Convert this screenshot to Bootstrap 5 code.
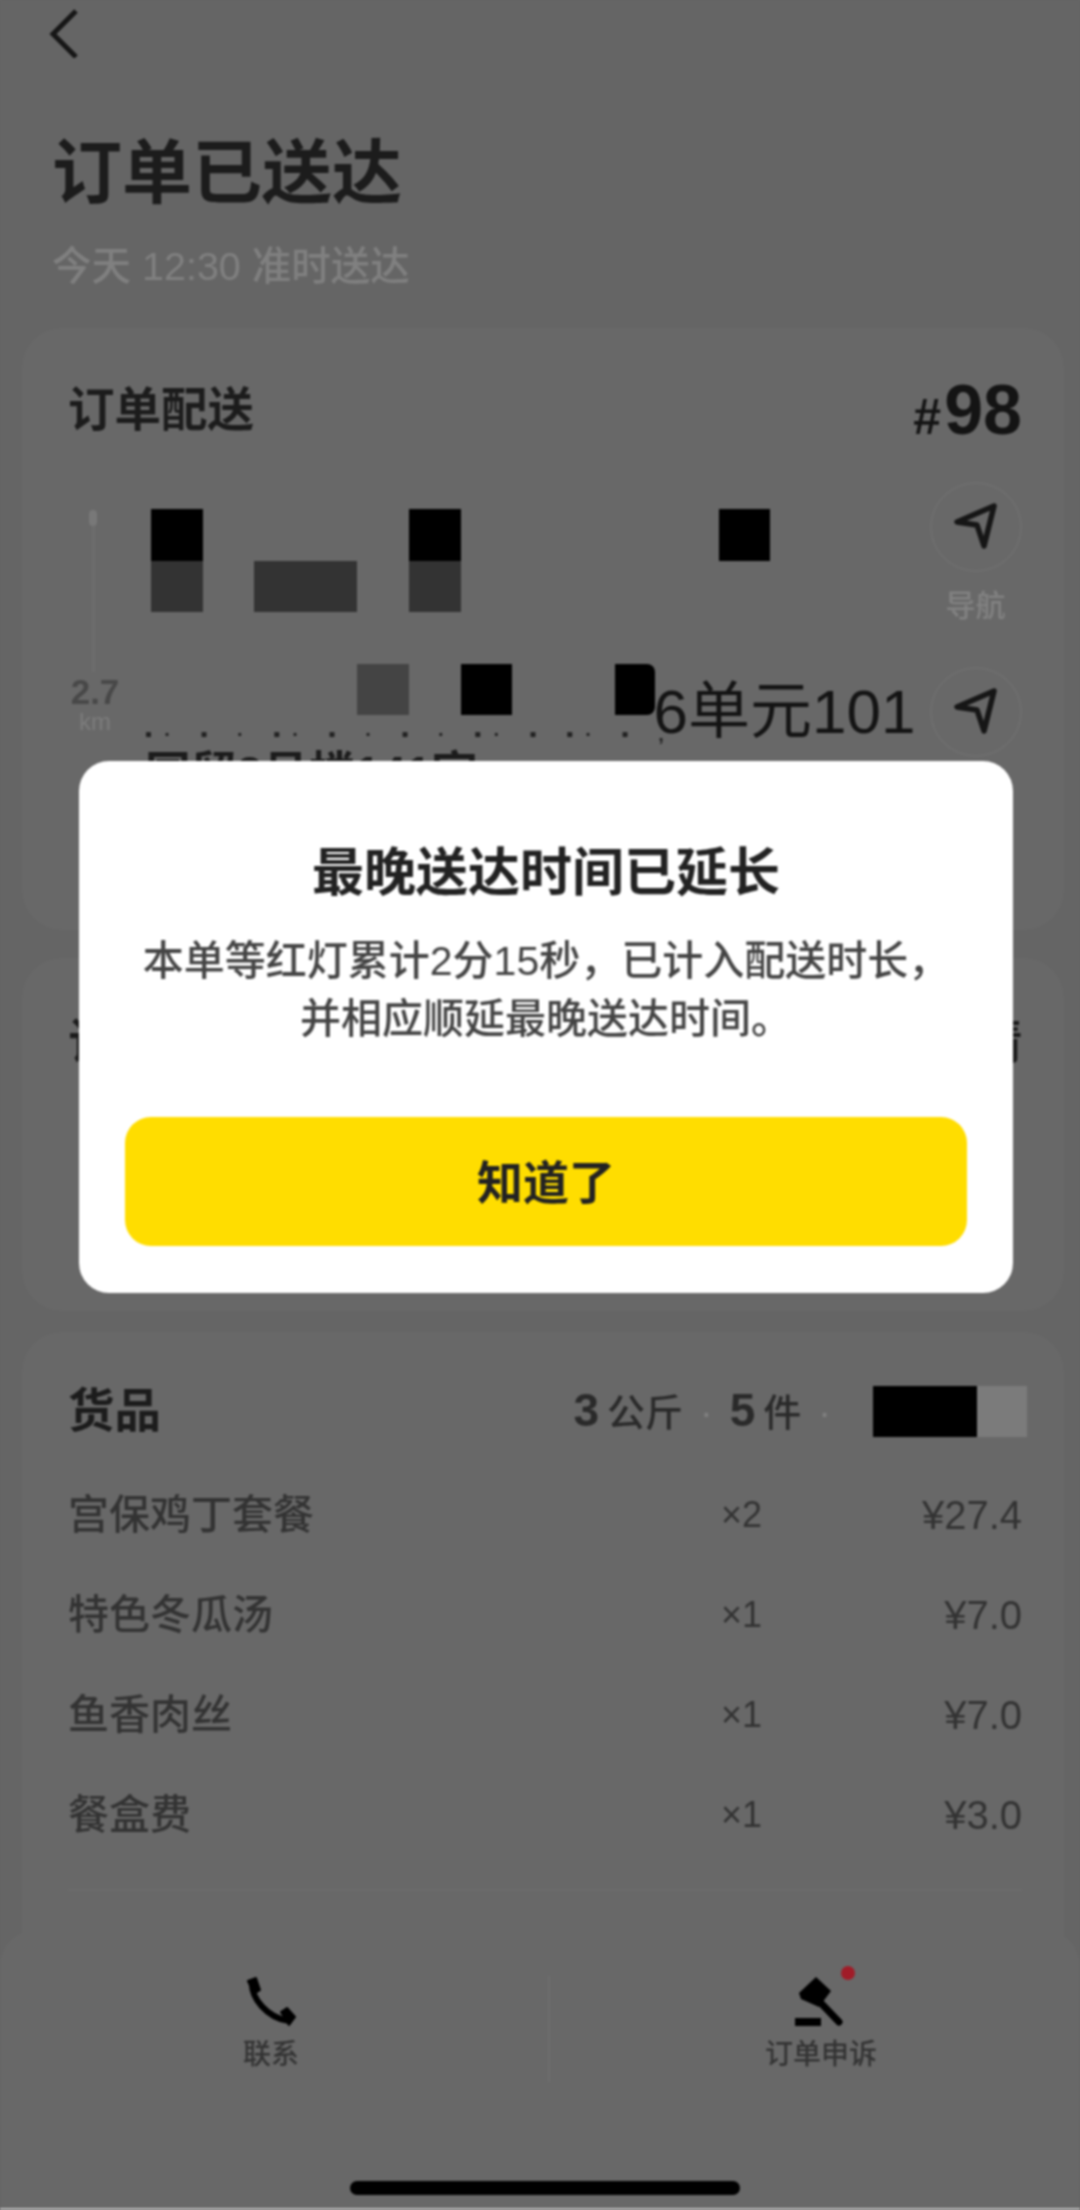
<!DOCTYPE html>
<html lang="zh-CN">
<head>
  <meta charset="UTF-8" />
  <meta name="viewport" content="width=device-width, initial-scale=1.0" />
  <title>订单已送达</title>
  <link href="https://cdn.jsdelivr.net/npm/bootstrap@5.3.3/dist/css/bootstrap.min.css" rel="stylesheet">
  <style>
    body { background: #656565; margin: 0; font-family: "Liberation Sans", "Noto Sans CJK SC", sans-serif; color: #1c1c1c; }
    .screen { width: 1080px; height: 2210px; background: #656565; overflow: hidden; filter: blur(1px); }

    .back-icon { display: block; margin: 8px 0 0 46px; }
    .page-title { margin: 76px 0 0 52px; font-size: 70px; line-height: 80px; font-weight: 700; color: #1c1c1c; }
    .page-sub { margin: 27px 0 0 52px; font-size: 39.5px; line-height: 50px; font-weight: 500; color: #808080; }

    .sheet { background: #686868; border: 0; border-radius: 40px; margin: 0 16px 0 22px; padding: 0 42px 0 46px; }
    .sheet-route { margin-top: 37px; height: 602px; padding-top: 52px; }
    .sheet-hidden { margin-top: 28px; height: 353px; padding-top: 54px; }
    .sheet-goods { margin-top: 21px; height: 660px; padding-top: 49px; }

    .sheet-head { height: 60px; line-height: 60px; font-size: 46.5px; font-weight: 700; color: #1c1c1c; }
    .order-no { font-size: 70px; font-weight: 700; color: #141414; }
    .order-no small { font-size: 50px; margin-right: 3px; }

    .route-row { margin-top: 42px; }
    .route-left { width: 84px; }
    .route-dot { width: 8px; height: 16px; margin: 28px 0 0 21px; background: #787878; border-radius: 4px; }
    .route-line { width: 3px; height: 146px; margin-left: 24px; background: #6d6d6d; }
    .route-km { width: 54px; margin-top: 5px; text-align: center; font-size: 35px; line-height: 30px; font-weight: 700; color: #484848; }
    .route-unit { width: 54px; margin-top: 5px; text-align: center; font-size: 24px; line-height: 20px; color: #7c7c7c; }
    .route-mid { width: 774px; padding-top: 27px; }
    .route-right { width: 94px; margin-left: 4px; }

    .mosaic { display: grid; grid-template-columns: repeat(15, 51.6px); grid-auto-rows: 51.5px; height: 206px; }
    .blk { background: #000; }
    .blk-mid { background: #333; }
    .blk-soft { background: #444; }
    .a1 { grid-area: 1 / 1; } .a2 { grid-area: 1 / 6; } .a3 { grid-area: 1 / 12; }
    .a4 { grid-area: 2 / 1; } .a5 { grid-area: 2 / 3 / 3 / 5; } .a6 { grid-area: 2 / 6; }
    .a7 { grid-area: 4 / 5; } .a8 { grid-area: 4 / 7; }
    .a9 { grid-area: 4 / 10; width: 40px; border-radius: 0 8px 8px 0; }
    .addr-big { grid-area: 4 / 10 / 5 / 16; padding: 22px 0 0 38px; font-size: 62px; line-height: 52px; white-space: nowrap; color: #141414; }
    .addr-marks { margin: 10px 0 0 -6px; height: 18px; font-size: 20px; line-height: 18px; letter-spacing: 12px; font-weight: 700; color: #222; white-space: nowrap; }
    .addr-line { margin: 0 0 0 -6px; font-size: 46px; line-height: 60px; font-weight: 700; color: #1c1c1c; white-space: nowrap; }

    .nav-circle { width: 92px; height: 90px; border: 2px solid #6e6e6e; border-radius: 50%; }
    .nav-label { margin-top: 20px; margin-bottom: 47px; font-size: 30px; line-height: 28px; font-weight: 500; color: #828282; }

    .goods-meta { font-size: 38px; font-weight: 500; color: #2a2a2a; }
    .goods-meta b { font-size: 46px; font-weight: 700; margin-right: 8px; }
    .goods-meta i { font-style: normal; color: #808080; margin: 0 17px; }
    .meta-black { width: 104px; height: 51px; background: #000; margin-left: 25px; }
    .meta-grey { width: 50px; height: 51px; background: #7b7b7b; margin-right: -5px; }
    .goods-list { margin-top: 24px; }
    .goods-item { height: 100px; line-height: 100px; font-size: 41px; font-weight: 500; color: #333; }
    .goods-qty { width: 60px; margin-right: 60px; text-align: right; font-size: 36px; }
    .goods-price { width: 200px; text-align: right; font-size: 40px; }
    .goods-name { flex: 1; }
    .goods-rule { margin-top: 24px; height: 2px; background: #6b6b6b; }

    .dock { height: 280px; background: #686868; border-radius: 36px 36px 0 0; border-bottom: 2px solid #bdbdbd; }
    .dock-cols { padding-top: 46px; }
    .dock-a { width: 548px; padding-right: 6px; }
    .dock-b { width: 532px; padding-left: 12px; border-left: 2px solid #6e6e6e; height: 106px; }
    .dock-label { margin-top: 10px; font-size: 28px; line-height: 34px; font-weight: 500; color: #333; }
    .home-bar { width: 390px; height: 14px; margin: 99px 0 0 350px; background: #000; border-radius: 7px; }

    .notice { top: 761px; left: 79px; width: 934px; height: 532px; padding: 77px 46px 47px; border: 0; border-radius: 30px; background: #fff; z-index: 10; }
    .notice-title { font-size: 52px; line-height: 70px; font-weight: 700; color: #222; margin: 0; }
    .notice-text { margin: 24px -20px 0; font-size: 41px; line-height: 58px; font-weight: 500; color: #444; }
    .notice-btn { margin-top: 69px; height: 129px; padding-top: 10px; border: 0; border-radius: 26px; background: #ffdd00; color: #222; font-size: 46px; font-weight: 700; }
  </style>
</head>
<body>
  <div class="screen position-relative">
    <svg class="back-icon" width="36" height="50" viewBox="0 0 36 50"><path d="M30 3 L7 26 L30 49" fill="none" stroke="#161616" stroke-width="5"/></svg>
    <h1 class="page-title">订单已送达</h1>
    <p class="page-sub">今天 12:30 准时送达</p>

    <!-- 订单配送 -->
    <div class="card sheet sheet-route">
      <div class="sheet-head d-flex justify-content-between">
        <span>订单配送</span>
        <span class="order-no"><small>#</small>98</span>
      </div>
      <div class="route-row d-flex">
        <div class="route-left">
          <div class="route-dot"></div>
          <div class="route-line"></div>
          <div class="route-km">2.7</div>
          <div class="route-unit">km</div>
        </div>
        <div class="route-mid">
          <div class="mosaic">
            <div class="blk a1"></div>
            <div class="blk a2"></div>
            <div class="blk a3"></div>
            <div class="blk-mid a4"></div>
            <div class="blk-mid a5"></div>
            <div class="blk-mid a6"></div>
            <div class="blk-soft a7"></div>
            <div class="blk a8"></div>
            <div class="blk a9"></div>
            <div class="addr-big">6单元101</div>
          </div>
          <div class="addr-marks">▪· ▪ · ▪· ▪ · ▪ · ▪· ▪ ▪· ▪ ,</div>
          <div class="addr-line">国贸3号楼141室</div>
        </div>
        <div class="route-right d-flex flex-column align-items-center">
          <div class="nav-circle d-flex align-items-center justify-content-center">
            <svg width="50" height="48" viewBox="0 0 50 48"><path d="M43 3 L6 19 L26 22 L33 43 Z" fill="none" stroke="#161616" stroke-width="5.5" stroke-linejoin="round"/></svg>
          </div>
          <div class="nav-label">导航</div>
          <div class="nav-circle d-flex align-items-center justify-content-center">
            <svg width="50" height="48" viewBox="0 0 50 48"><path d="M43 3 L6 19 L26 22 L33 43 Z" fill="none" stroke="#161616" stroke-width="5.5" stroke-linejoin="round"/></svg>
          </div>
        </div>
      </div>
    </div>

    <!-- mostly behind the dialog, only the row edges show -->
    <div class="card sheet sheet-hidden">
      <div class="sheet-head d-flex justify-content-between">
        <span>订单详情</span>
        <span>详情</span>
      </div>
    </div>

    <!-- 货品 -->
    <div class="card sheet sheet-goods">
      <div class="sheet-head d-flex justify-content-between align-items-center">
        <span>货品</span>
        <div class="d-flex align-items-center">
          <div class="goods-meta"><b>3</b>公斤<i>·</i><b>5</b>件<i>·</i></div>
          <div class="meta-black"></div>
          <div class="meta-grey"></div>
        </div>
      </div>
      <div class="goods-list">
        <div class="goods-item d-flex"><span class="goods-name">宫保鸡丁套餐</span><span class="goods-qty">×2</span><span class="goods-price">¥27.4</span></div>
        <div class="goods-item d-flex"><span class="goods-name">特色冬瓜汤</span><span class="goods-qty">×1</span><span class="goods-price">¥7.0</span></div>
        <div class="goods-item d-flex"><span class="goods-name">鱼香肉丝</span><span class="goods-qty">×1</span><span class="goods-price">¥7.0</span></div>
        <div class="goods-item d-flex"><span class="goods-name">餐盒费</span><span class="goods-qty">×1</span><span class="goods-price">¥3.0</span></div>
      </div>
      <div class="goods-rule"></div>
    </div>

    <!-- bottom actions -->
    <div class="dock position-absolute bottom-0 start-0 w-100">
      <div class="dock-cols d-flex">
        <div class="dock-a d-flex flex-column align-items-center">
          <svg width="52" height="52" viewBox="0 0 52 52">
            <path d="M7 6 C6 22 22 42 44 45" fill="none" stroke="#000" stroke-width="6" stroke-linecap="round"/>
            <path d="M3 5 L11 2 L15 14 L9 18 Z M36 36 L42 32 L50 41 L44 49 Z" fill="#000" stroke="#000" stroke-width="2" stroke-linejoin="round"/>
          </svg>
          <div class="dock-label">联系</div>
        </div>
        <div class="dock-b d-flex flex-column align-items-center">
          <div class="position-relative">
            <svg width="56" height="52" viewBox="0 0 56 52">
              <path d="M23 1 L38 15 L26 31 L8 23 L6 17 Z" fill="#000"/>
              <path d="M25 24 L46 46" stroke="#000" stroke-width="7" stroke-linecap="round"/>
              <rect x="2" y="42" width="26" height="8" fill="#000"/>
            </svg>
            <span class="position-absolute rounded-circle" style="top:-10px;right:-6px;width:14px;height:14px;background:#a01c28"></span>
          </div>
          <div class="dock-label">订单申诉</div>
        </div>
      </div>
      <div class="home-bar"></div>
    </div>

    <!-- dialog -->
    <div class="card notice position-absolute text-center">
      <h2 class="notice-title">最晚送达时间已延长</h2>
      <p class="notice-text">本单等红灯累计2分15秒，已计入配送时长，<br>并相应顺延最晚送达时间。</p>
      <button type="button" class="btn notice-btn w-100">知道了</button>
    </div>
  </div>
  <script src="https://cdn.jsdelivr.net/npm/bootstrap@5.3.3/dist/js/bootstrap.bundle.min.js"></script>
</body>
</html>
